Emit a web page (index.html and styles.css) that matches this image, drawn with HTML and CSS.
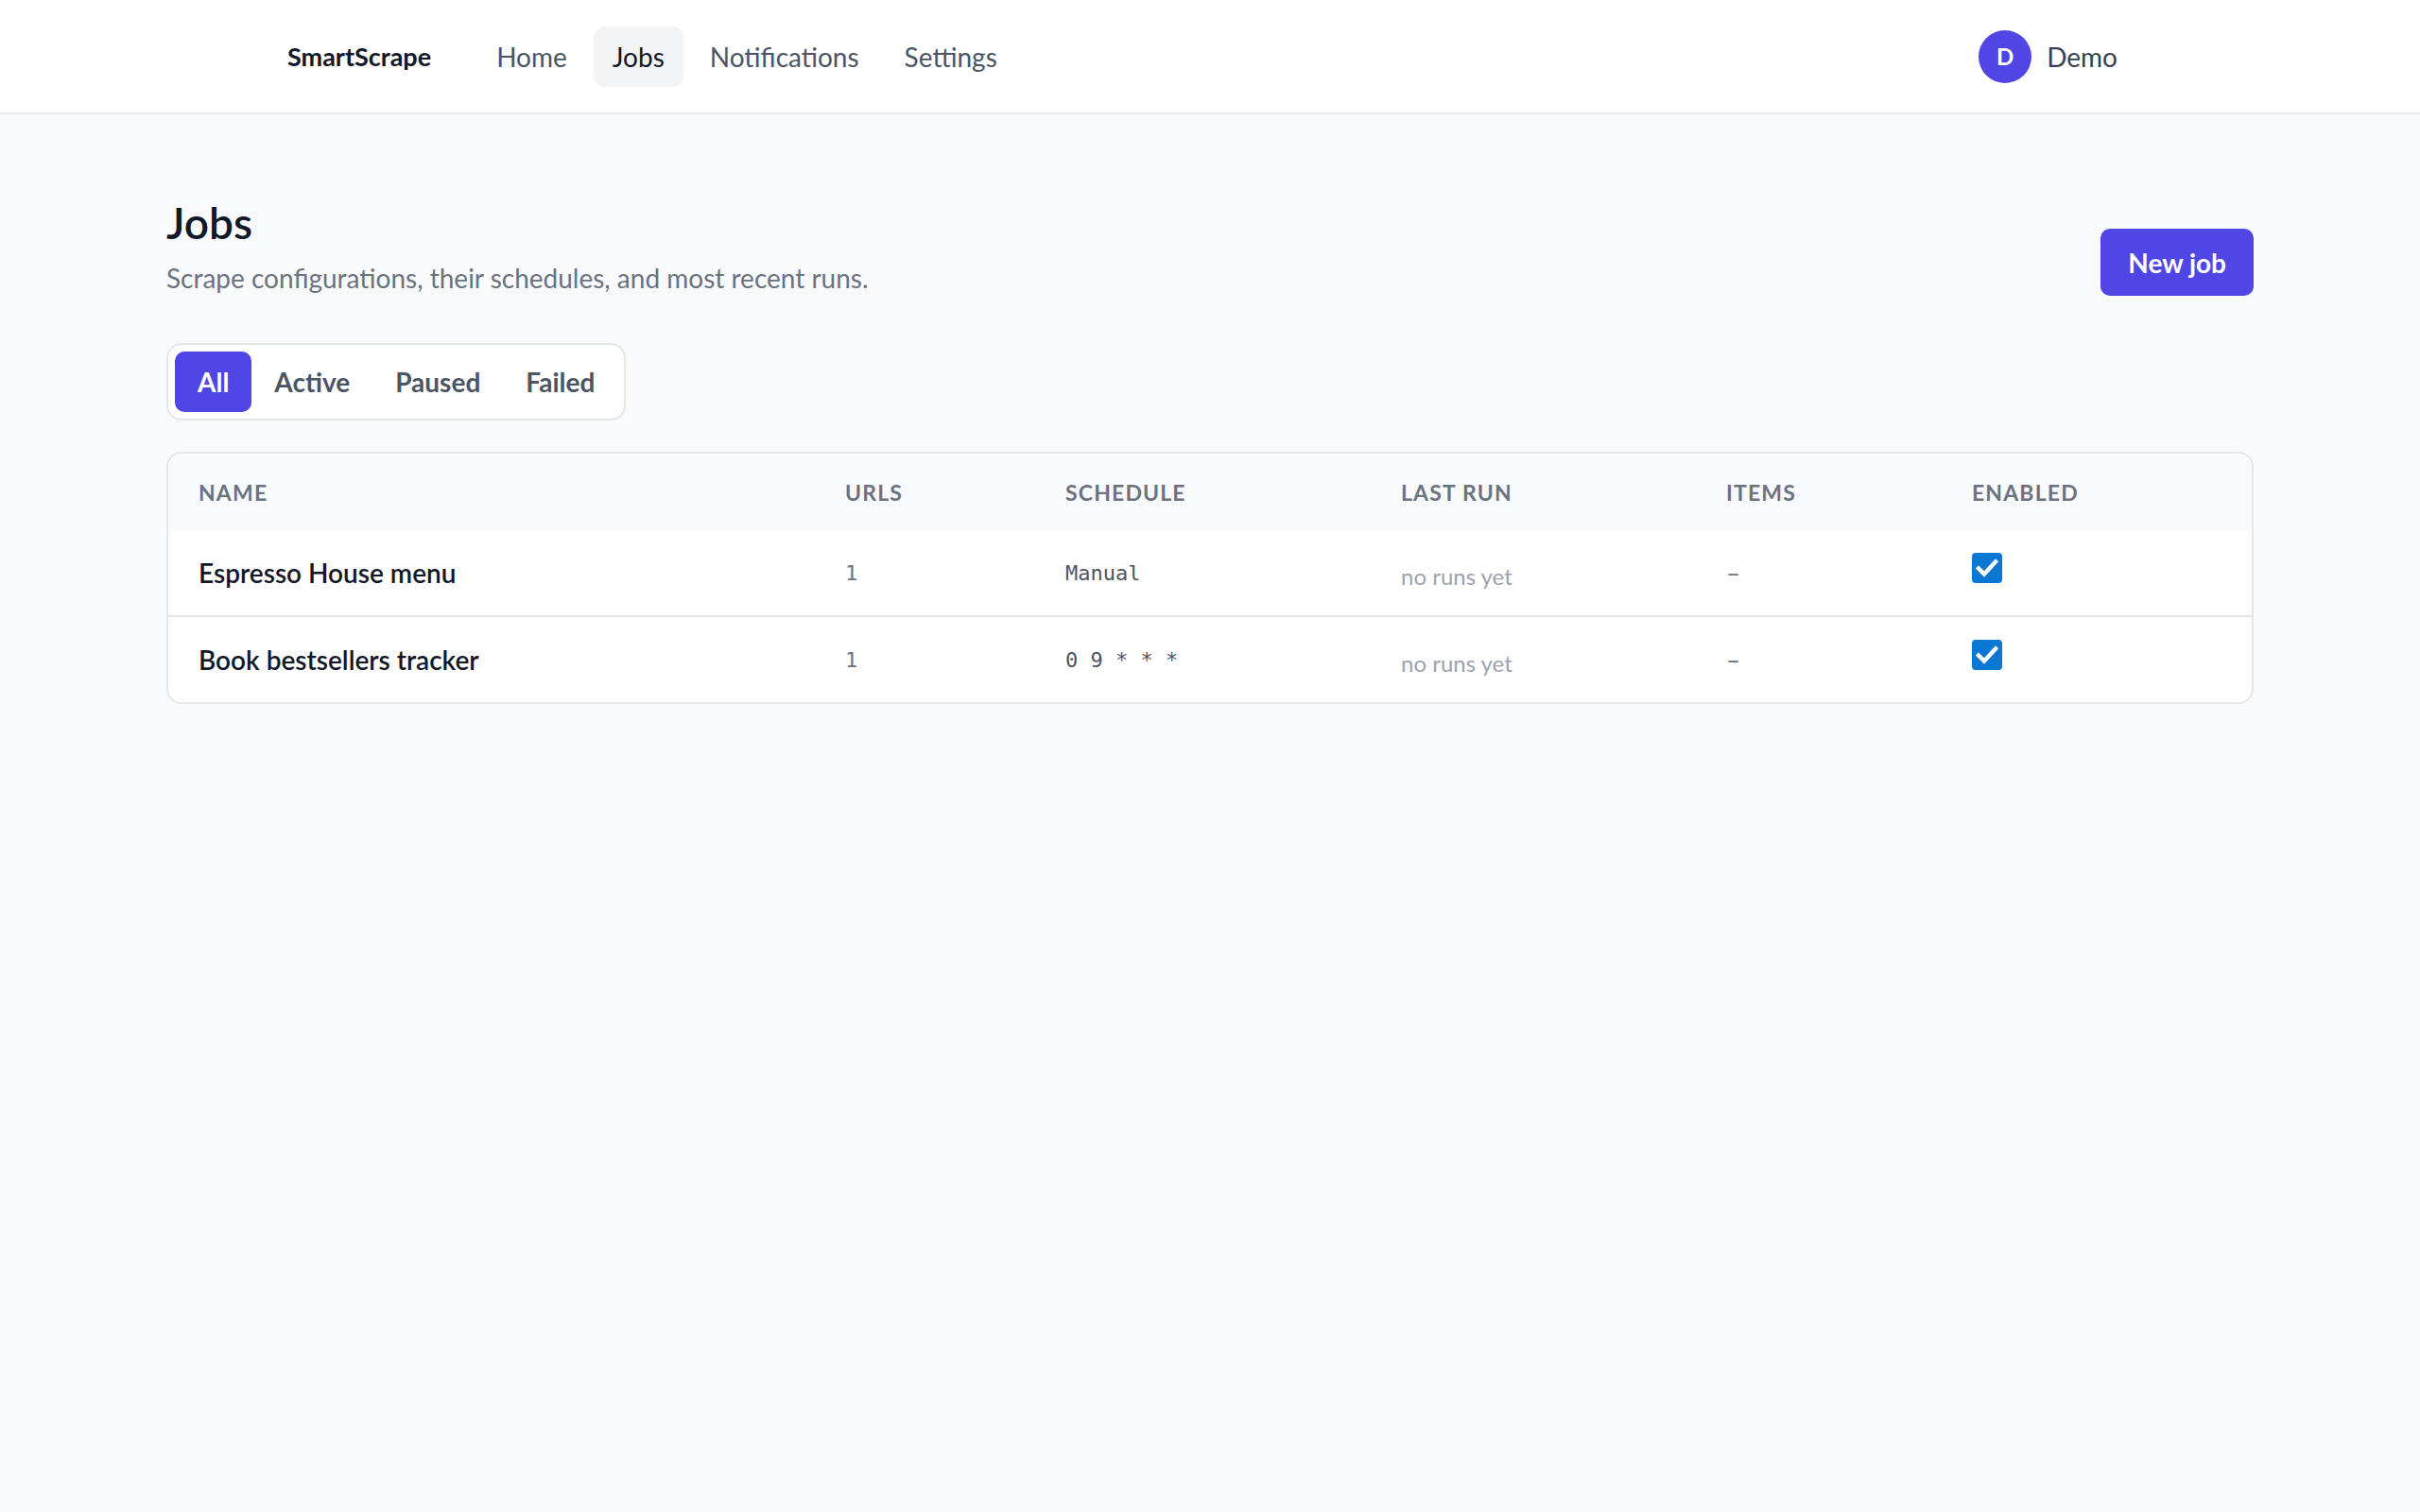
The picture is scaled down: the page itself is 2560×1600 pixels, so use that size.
FILE: index.html
```html
<!DOCTYPE html>
<html lang="en">
<head>
<meta charset="utf-8">
<title>Jobs · SmartScrape</title>
<link rel="stylesheet" href="styles.css">
</head>
<body>
<header class="topbar">
  <div class="topbar-inner">
    <div class="brand">SmartScrape</div>
    <nav class="nav">
      <a class="nav-link" href="#">Home</a>
      <a class="nav-link active" href="#">Jobs</a>
      <a class="nav-link" href="#">Notifications</a>
      <a class="nav-link" href="#">Settings</a>
    </nav>
    <div class="user">
      <span class="avatar">D</span>
      <span class="user-name">Demo</span>
    </div>
  </div>
</header>

<main class="main">
  <div class="page-head">
    <div>
      <h1 class="title">Jobs</h1>
      <p class="subtitle">Scrape configurations, their schedules, and most recent runs.</p>
    </div>
    <button class="btn-primary">New job</button>
  </div>

  <div class="filters">
    <button class="filter on">All</button>
    <button class="filter">Active</button>
    <button class="filter">Paused</button>
    <button class="filter">Failed</button>
  </div>

  <div class="table-card">
    <table class="jobs">
      <colgroup>
        <col class="c-name"><col class="c-urls"><col class="c-sched"><col class="c-last"><col class="c-items"><col class="c-en">
      </colgroup>
      <thead>
        <tr><th>Name</th><th>URLs</th><th>Schedule</th><th>Last run</th><th>Items</th><th>Enabled</th></tr>
      </thead>
      <tbody>
        <tr>
          <td class="name">Espresso House menu</td>
          <td class="mono muted">1</td>
          <td class="mono">Manual</td>
          <td class="faint">no runs yet</td>
          <td class="muted">–</td>
          <td><span class="check"><svg viewBox="0 0 32 32" width="32" height="32"><path d="M7 16.5 L13 22.5 L25 9.5" fill="none" stroke="#fff" stroke-width="4.5" stroke-linecap="square" stroke-linejoin="miter"/></svg></span></td>
        </tr>
        <tr>
          <td class="name">Book bestsellers tracker</td>
          <td class="mono muted">1</td>
          <td class="mono">0 9 * * *</td>
          <td class="faint">no runs yet</td>
          <td class="muted">–</td>
          <td><span class="check"><svg viewBox="0 0 32 32" width="32" height="32"><path d="M7 16.5 L13 22.5 L25 9.5" fill="none" stroke="#fff" stroke-width="4.5" stroke-linecap="square" stroke-linejoin="miter"/></svg></span></td>
        </tr>
      </tbody>
    </table>
  </div>
</main>
</body>
</html>
```

FILE: styles.css
```css
* { box-sizing: border-box; }

html, body {
  margin: 0;
  padding: 0;
}

body {
  background: #f9fafb;
  font-family: "Lato", "Open Sans", sans-serif;
  color: #111827;
  min-height: 1600px;
}

.topbar {
  background: #ffffff;
  border-bottom: 2px solid #e5e7eb;
  height: 121px;
}

.topbar-inner {
  width: 1984px;
  margin: 0 auto;
  height: 100%;
  padding: 0 16px;
  display: flex;
  align-items: center;
}

.brand {
  font-size: 27px;
  font-weight: 700;
  color: #111827;
}

.nav {
  display: flex;
  gap: 8px;
  margin-left: 49px;
}

.nav-link {
  display: flex;
  align-items: center;
  height: 64px;
  padding: 0 20px;
  border-radius: 12px;
  font-size: 28px;
  color: #4b5563;
  text-decoration: none;
}

.nav-link.active {
  background: #f3f4f6;
  color: #111827;
}

.user {
  margin-left: auto;
  margin-right: 16px;
  display: flex;
  align-items: center;
  gap: 16px;
}

.avatar {
  width: 56px;
  height: 56px;
  border-radius: 50%;
  background: #4f46e5;
  color: #fff;
  font-weight: 700;
  font-size: 24px;
  display: flex;
  align-items: center;
  justify-content: center;
}

.user-name {
  font-size: 28px;
  color: #374151;
}

.main {
  width: 2208px;
  margin: 0 auto;
  padding-top: 87px;
}

.page-head {
  display: flex;
  justify-content: space-between;
  align-items: flex-end;
}

.title {
  margin: 0;
  font-size: 46px;
  line-height: 1.2;
  font-weight: 600;
  color: #111827;
}

.subtitle {
  margin: 11px 0 0;
  font-size: 28px;
  line-height: 40px;
  color: #6b7280;
}

.btn-primary {
  height: 71px;
  padding: 0 29px;
  border: 0;
  border-radius: 10px;
  background: #4f46e5;
  color: #fff;
  font-family: inherit;
  font-size: 28px;
  font-weight: 700;
  margin-bottom: 1px;
}

.filters {
  margin-top: 49px;
  display: inline-flex;
  gap: 0;
  padding: 7px;
  background: #fff;
  border: 2px solid #e5e7eb;
  border-radius: 16px;
}

.filter {
  height: 64px;
  padding: 0 24px;
  border: 0;
  border-radius: 10px;
  background: transparent;
  font-family: inherit;
  font-size: 28px;
  font-weight: 700;
  color: #4b5563;
}

.filter.on {
  background: #4f46e5;
  color: #fff;
}

.table-card {
  margin-top: 33px;
  background: #fff;
  border: 2px solid #e5e7eb;
  border-radius: 16px;
  overflow: hidden;
}

.jobs {
  width: 100%;
  border-collapse: collapse;
  table-layout: fixed;
}

.c-name { width: 684px; }
.c-urls { width: 233px; }
.c-sched { width: 355px; }
.c-last { width: 344px; }
.c-items { width: 260px; }
.c-en { width: 328px; }

.jobs th {
  background: #f9fafb;
  height: 81px;
  padding: 0 32px;
  text-align: left;
  font-size: 23px;
  font-weight: 700;
  letter-spacing: 0.05em;
  text-transform: uppercase;
  color: #6b7280;
}

.jobs td {
  height: 91px;
  padding: 0 32px;
  font-size: 26px;
  vertical-align: middle;
}

.jobs tbody tr + tr td {
  border-top: 2px solid #e5e7eb;
}

.jobs td.name {
  font-size: 28px;
  font-weight: 600;
  color: #111827;
}

.jobs td.mono {
  font-family: "DejaVu Sans Mono", monospace;
  font-size: 22px;
  color: #4b5563;
}

.jobs td.muted {
  color: #6b7280;
}

.jobs td.faint {
  font-size: 24px;
  color: #9ca3af;
  padding-top: 6px;
}

.check {
  display: inline-flex;
  width: 32px;
  height: 32px;
  border-radius: 4px;
  background: #0b77d5;
  vertical-align: middle;
  position: relative;
  top: -7px;
}
```
